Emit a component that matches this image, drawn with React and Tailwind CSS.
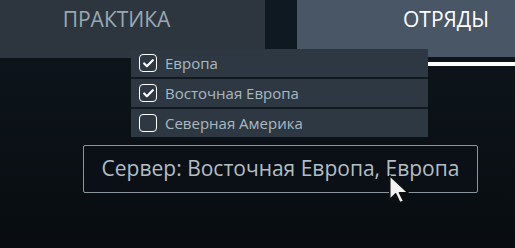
import { Check } from 'lucide-react';

const SERVERS = [
  { id: 'eu', label: 'Европа', checked: true },
  { id: 'ee', label: 'Восточная Европа', checked: true },
  { id: 'na', label: 'Северная Америка', checked: false },
];

const Cursor = () => (
  <svg width="26" height="32" viewBox="0 0 24 30" className="absolute left-[388px] top-[174px]">
    <path d="M1.5 1.5 L1.5 24 L7 18.5 L11 27 L14.5 25.5 L10.5 17.5 L18.5 17.5 Z" fill="#f2f2f2" stroke="#111" strokeWidth="1.4" strokeLinejoin="round" />
  </svg>
);

export default function App() {
  return (
    <div
      className="relative w-[515px] h-[248px] overflow-hidden bg-gradient-to-b from-[#0e171e] to-[#080c10]"
      style={{ fontFamily: '"Open Sans", "Noto Sans", sans-serif' }}
    >
      {/* Tabs */}
      <div className="flex items-start">
        <div className="w-[265px] h-[58px] bg-[#2d363f] flex justify-center pt-[4px] pr-[32px]">
          <span className="text-[21px] font-medium text-[#9aa8b1]">ПРАКТИКА</span>
        </div>
        <div className="w-[32px] h-[49px] bg-[#0f1921]" />
        <div className="flex-1">
          <div className="h-[57px] bg-[#485666] flex justify-end pt-[4px] pr-[26px]">
            <span className="text-[21px] font-medium text-white">ОТРЯДЫ</span>
          </div>
          <div className="h-[5px]" />
          <div className="h-[4px] bg-white" />
        </div>
      </div>

      {/* Dropdown */}
      <div className="absolute left-[131px] top-[49px] w-[297px] bg-[#111a20] flex flex-col gap-[2px]">
        {SERVERS.map(s => (
          <div key={s.id} className="h-[28px] bg-[#2e3842] flex items-center gap-[8px] pl-[8px]">
            <span className="w-[18px] h-[18px] rounded-[4px] border-[1.5px] border-white flex items-center justify-center">
              {s.checked && <Check className="w-[13px] h-[13px] text-white" strokeWidth={4} />}
            </span>
            <span className="text-[15px] text-[#a9b8c1]">{s.label}</span>
          </div>
        ))}
      </div>

      {/* Tooltip */}
      <div className="absolute left-[83px] top-[145px] w-[395px] h-[48px] border border-[#8c959b] rounded-[2px] bg-[#0a1016] flex items-center justify-center">
        <span className="text-[21px] text-[#b2bec4]">Сервер: Восточная Европа, Европа</span>
      </div>

      <Cursor />
    </div>
  );
}
